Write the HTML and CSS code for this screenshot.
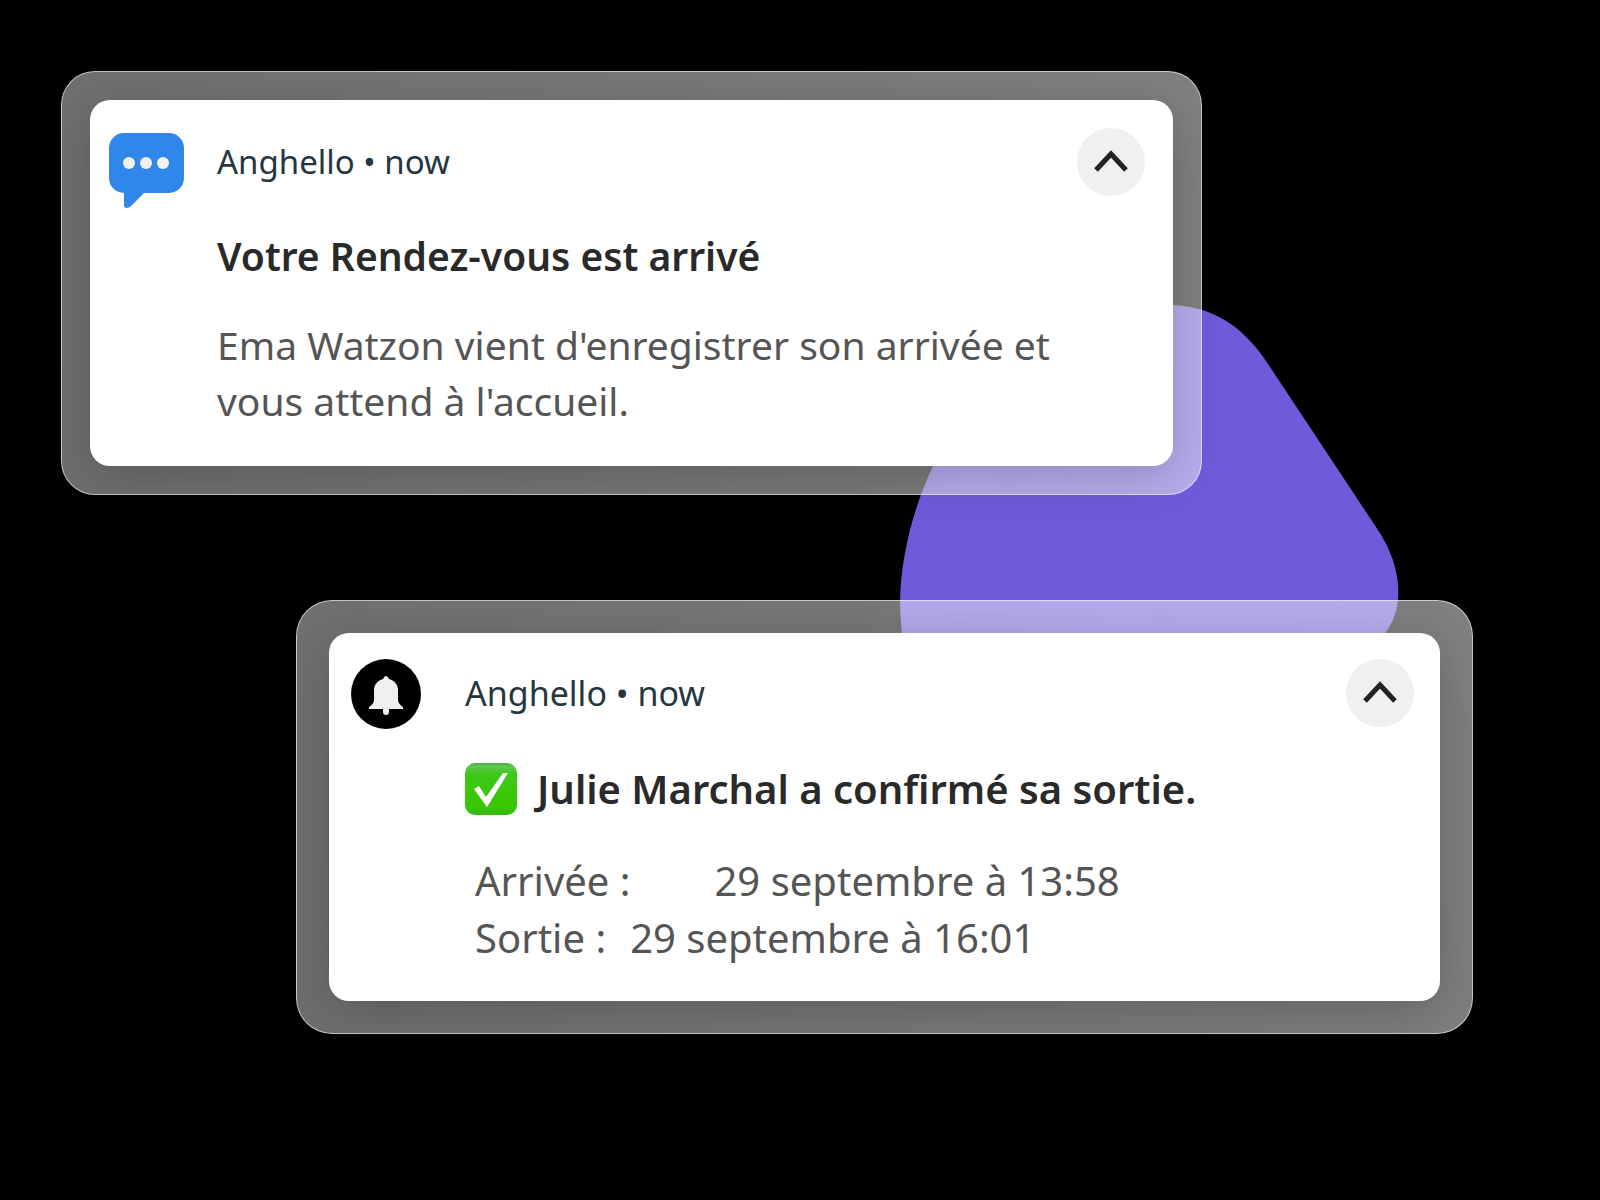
FILE: index.html
```
<!DOCTYPE html>
<html lang="fr">
<head>
  <meta charset="UTF-8" />
  <meta name="viewport" content="width=device-width, initial-scale=1.0"/>
  <title>Anghello notifications</title>
  <link rel="stylesheet" href="styles.css">
</head>
<body>

  <main class="notifications">
    <svg class="blob" viewBox="0 0 500 400" aria-hidden="true">
      <path d="M273 5 C311 7 340 24 364 58 L476 227 C493 252 500 276 498 299 C496 325 480 345 450 364 C400 392 60 396 20 372 C3 360 1 335 0 302 C1 255 13 209 33 166 C75 80 160 -4 273 5 Z"/>
    </svg>

    <div class="frame frame-visit">
      <article class="card">
        <svg class="icon" viewBox="0 0 75 75" aria-hidden="true">
          <path fill="#2f86eb" d="M15 0 H60 A15 15 0 0 1 75 15 V45 A15 15 0 0 1 60 60 H35 L22 73 Q20 75 18 75 Q15 75 15 72 V60 A15 15 0 0 1 0 45 V15 A15 15 0 0 1 15 0 Z"/>
          <circle cx="20" cy="30" r="6" fill="#f1f1f1"/>
          <circle cx="37" cy="30" r="6" fill="#f1f1f1"/>
          <circle cx="54" cy="30" r="6" fill="#f1f1f1"/>
        </svg>
        <div class="content">
          <header class="card-header">
            <span class="app-name">Anghello • now</span>
            <button type="button" class="collapse" aria-label="Réduire">
              <svg viewBox="0 0 68 68"><path d="M19 42 L34 26 L49 42"/></svg>
            </button>
          </header>
          <h2>Votre Rendez-vous est arrivé</h2>
          <p>Ema Watzon vient d'enregistrer son arrivée et vous attend à l'accueil.</p>
        </div>
      </article>
    </div>

    <div class="frame frame-exit">
      <article class="card">
        <svg class="icon" viewBox="0 0 70 70" aria-hidden="true">
          <circle cx="35" cy="35" r="35" fill="#000"/>
          <path fill="#efefed" d="M35 17 Q37 17 38 20 C44 22 47 26 47 31 V40 C47 44 49 46 52 48 V50 H38 V53 Q38 56 35 56 Q32 56 32 53 V50 H18 V48 C21 46 23 44 23 40 V31 C23 26 26 22 32 20 Q33 17 35 17 Z"/>
        </svg>
        <div class="content">
          <header class="card-header">
            <span class="app-name">Anghello • now</span>
            <button type="button" class="collapse" aria-label="Réduire">
              <svg viewBox="0 0 68 68"><path d="M19 42 L34 26 L49 42"/></svg>
            </button>
          </header>
          <h2>
            <svg class="check" viewBox="0 0 52 52" aria-hidden="true">
              <defs>
                <linearGradient id="gloss" x1="0" y1="0" x2="0" y2="1">
                  <stop offset="0" stop-color="#43ad3c"/>
                  <stop offset="0.06" stop-color="#62c655"/>
                  <stop offset="0.22" stop-color="#3cc818"/>
                  <stop offset="0.85" stop-color="#38c700"/>
                  <stop offset="1" stop-color="#35b817"/>
                </linearGradient>
              </defs>
              <rect width="52" height="52" rx="10" fill="url(#gloss)"/>
              <path fill="#fff" d="M9 26 L14 23 L21 34 L38 10 L43 10 L22 44 Z"/>
            </svg>
            Julie Marchal a confirmé sa sortie.
          </h2>
          <dl class="times">
            <div class="time time-in">
              <dt>Arrivée :</dt>
              <dd>29 septembre à 13:58</dd>
            </div>
            <div class="time time-out">
              <dt>Sortie :</dt>
              <dd>29 septembre à 16:01</dd>
            </div>
          </dl>
        </div>
      </article>
    </div>
  </main>

</body>
</html>
```
FILE: styles.css
```
* {
  box-sizing: border-box;
}
body {
  font-family: "Noto Sans", "Open Sans", sans-serif;
  background-color: #000;
  margin: 0;
}
.notifications {
  position: relative;
  display: flex;
  flex-direction: column;
  gap: 105px;
  padding: 71px 127px 71px 61px;
}
/* purple shape behind both notifications */
.blob {
  position: absolute;
  top: 300px;
  right: 200px;
  width: 500px;
  fill: #6e5bda;
}
.frame {
  position: relative;
  border: 1px solid rgba(255, 255, 255, 0.6);
  border-radius: 34px;
  background: linear-gradient(75deg, rgba(255, 255, 255, 0.43), rgba(255, 255, 255, 0.5));
}
.frame-visit {
  margin-right: 271px;
  padding: 28px;
  font-size: 39px;
  line-height: 56px;
}
.frame-exit {
  margin-left: 235px;
  padding: 32px;
  border-radius: 36px;
  font-size: 40px;
  line-height: 57px;
}
.card {
  display: flex;
  background-color: #fff;
  border-radius: 20px;
  box-shadow: 0 10px 48px rgba(0, 0, 0, 0.2);
}
.frame-visit .card {
  gap: 33px;
  padding: 28px 28px 37px 19px;
}
.frame-exit .card {
  gap: 44px;
  padding: 26px 26px 35px 22px;
}
.icon {
  flex: none;
}
.frame-visit .icon {
  width: 75px;
  height: 75px;
  margin-top: 5px;
}
.frame-exit .icon {
  width: 70px;
  height: 70px;
}
.content {
  flex: 1;
}
.card-header {
  display: flex;
  align-items: center;
  justify-content: space-between;
}
.app-name {
  font-size: 33px;
  color: #263640;
}
.frame-exit .app-name {
  font-size: 34px;
}
.collapse {
  width: 68px;
  height: 68px;
  padding: 0;
  border: none;
  border-radius: 50%;
  background-color: #f0f0f0;
  cursor: pointer;
}
.collapse svg {
  display: block;
  fill: none;
  stroke: #222;
  stroke-width: 5;
}
.collapse:hover {
  background-color: #e4e4e4;
}
h2 {
  display: flex;
  align-items: center;
  gap: 20px;
  margin: 32px 0 33px;
  font-size: inherit;
  font-weight: 600;
  color: #2a2a2a;
}
.frame-exit h2 {
  margin: 33px 0 35px;
}
.check {
  flex: none;
  width: 52px;
  height: 52px;
}
p, .times {
  margin: 0;
  color: #555;
}
p {
  padding-right: 60px;
}
.times {
  padding-left: 10px;
}
.time {
  display: flex;
}
.time-in {
  gap: 84px;
}
.time-out {
  gap: 24px;
}
dd {
  margin: 0;
}
```
